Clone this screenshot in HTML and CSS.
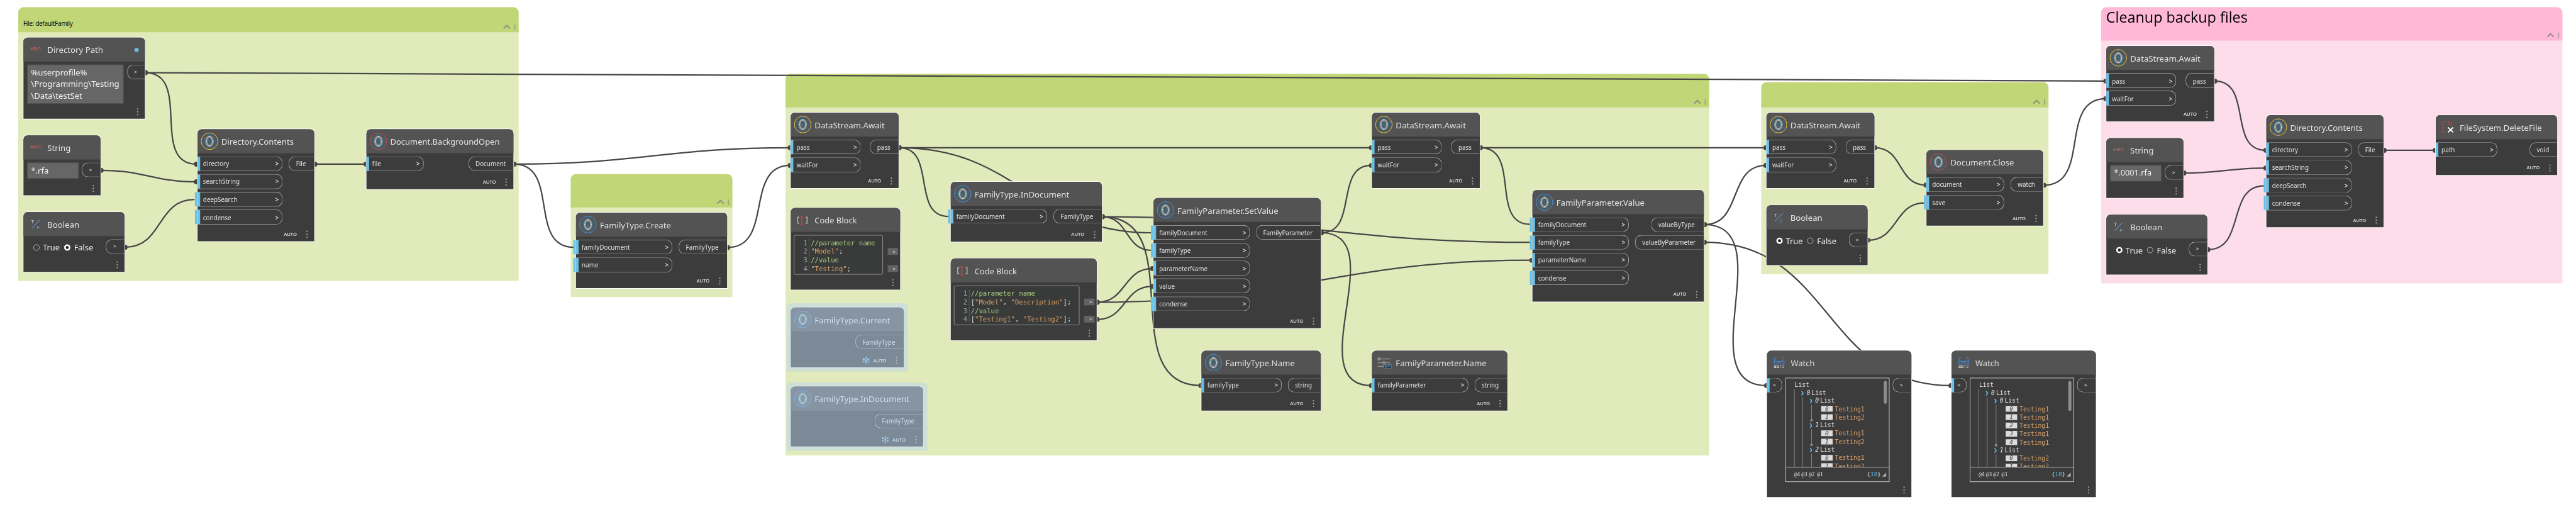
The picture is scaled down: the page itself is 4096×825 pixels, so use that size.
FILE: index.html
```html
<!DOCTYPE html>
<html lang="en">
<head>
<meta charset="utf-8">
<title>Graph workspace</title>
<link rel="stylesheet" href="styles.css">
</head>
<body>
<svg class="defs" width="0" height="0" aria-hidden="true">
  <symbol id="orchid" viewBox="0 0 34 34">
    <circle cx="17" cy="17" r="15.6" fill="#555"/>
    <g fill="#41606f">
      <ellipse cx="17" cy="8.5" rx="5.6" ry="7"/>
      <path d="M3 12 L13 11 L15 18 L8 23 Q2 19 3 12Z"/>
      <path d="M31 12 L21 11 L19 18 L26 23 Q32 19 31 12Z"/>
      <path d="M6.500 22 L14 19 L17 26 L14 31.800 Q8 31 6.500 22Z"/>
      <path d="M27.500 22 L20 19 L17 26 L20 31.800 Q26 31 27.500 22Z"/>
      <ellipse cx="17" cy="17" rx="6" ry="8.500"/>
    </g>
    <g fill="none" stroke="#6d6a66" stroke-width=".6">
      <path d="M3 11.500 L14 11 M31 11.500 L20 11 M5 24 L13 20 M29 24 L21 20 M13 32 L17 25 L21 32"/>
      <path d="M14.500 13 L17 17 L19.500 13 M17 17 V22 M14.500 22 L17 18 L19.500 22"/>
    </g>
    <ellipse cx="17" cy="17" rx="6.200" ry="8.900" fill="none" stroke="#9c9c9c" stroke-width="3.700"/>
    <g fill="#fff"><circle cx="17" cy="8.200" r=".9"/><circle cx="17" cy="25.800" r=".9"/><circle cx="10.800" cy="17" r=".9"/><circle cx="23.200" cy="17" r=".9"/></g>
    <circle cx="17" cy="17" r="16" fill="none" stroke="currentColor" stroke-width="1.200"/>
  </symbol>
  <symbol id="slash" viewBox="0 0 34 34">
    <path d="M10 25 L25 9" stroke="#5b8fc4" stroke-width="1.400"/>
  </symbol>
  <symbol id="code" viewBox="0 0 34 34">
    <path d="M10.500 11.800 H7.400 V23.200 H10.500 M22.500 11.800 H25.400 V23.200 H22.500" fill="none" stroke="#b9b9b9" stroke-width="1.700"/>
    <path d="M12.300 10 H18.500 M12.300 26.300 H18.500 M15.400 10 V26.300" fill="none" stroke="#b84545" stroke-width="2"/>
  </symbol>
  <symbol id="sliders" viewBox="0 0 34 34">
    <path d="M5 9.700 H29 M5 17 H29 M5 24 H18" stroke="#8b8b8b" stroke-width="1.900"/>
    <g fill="#555" stroke="#a0a0a0" stroke-width="1.600"><circle cx="7.700" cy="9.700" r="2.200"/><circle cx="17" cy="17" r="2.200"/></g>
    <rect x="17" y="20.500" width="14" height="7.800" fill="#2b343d" stroke="#888" stroke-width=".9"/>
    <path d="M18.500 22 H22.500 V26.500 H18.500Z M24 22 H29.500 V24 H26 V25.500 H24Z" fill="#3f84c6"/>
  </symbol>
  <symbol id="glasses" viewBox="0 0 34 34">
    <path d="M11.500 6.500 Q8 9 8 14 V19.500 H14.500 L17.500 15 L20.500 19.500 H26.800 V14 Q26.500 9 23.500 6.500 M8 14.500 H26.800" fill="none" stroke="#4585c7" stroke-width="1.400"/>
  </symbol>
  <symbol id="delete" viewBox="0 0 34 34">
    <path d="M13.500 27.800 H7.500 V6 H19 L25 11.500 V14.500 M19 6 V11.500 H25 M19 6 L25 11.500" fill="none" stroke="#b04c4c" stroke-width="1.200"/>
    <path d="M17.500 17.500 L27.500 27 M27.500 17.500 L17.500 27" stroke="#fff" stroke-width="2.300"/>
  </symbol>
  <symbol id="more" viewBox="0 0 4 15"><circle cx="2" cy="2" r="1.400"/><circle cx="2" cy="7.500" r="1.400"/><circle cx="2" cy="13" r="1.400"/></symbol>
  <symbol id="tools" viewBox="0 0 24 12">
    <path d="M1.200 8.800 L7.200 2.800 L13.200 8.800" fill="none" stroke="#858585" stroke-width="2.200"/>
    <path d="M22 .5 V12 M23.200 1.500 V11" fill="none" stroke="#7d7d7d" stroke-width="1.200" stroke-dasharray="1.200 1"/>
  </symbol>
  <symbol id="flake" viewBox="0 0 16 16">
    <path d="M8 .5 V15.500 M1.500 4.300 L14.500 11.700 M14.500 4.300 L1.500 11.700 M6 1.800 L8 3.800 L10 1.800 M6 14.200 L8 12.200 L10 14.200 M1 6.800 L3.800 6 L3 3.200 M15 9.200 L12.200 10 L13 12.800 M13 3.200 L12.200 6 L15 6.800 M3 12.800 L3.800 10 L1 9.200" fill="none" stroke="#a5dcf8" stroke-width="1.100"/>
  </symbol>
</svg>

<main class="window">
<div class="board">
  <section class="group" style="left:35px;top:14px;width:960px;height:524.500px;--head:48px">
    <header class="small"><h2>File: defaultFamily</h2><svg class="tools"><use href="#tools"/></svg></header>
  </section>
  <section class="group" style="left:1095.300px;top:334px;width:309.600px;height:235.700px;--head:64px">
    <header><h2></h2><svg class="tools"><use href="#tools"/></svg></header>
  </section>
  <section class="group" style="left:1507px;top:142px;width:1772px;height:731.600px;--head:64px">
    <header><h2></h2><svg class="tools"><use href="#tools"/></svg></header>
  </section>
  <section class="group" style="left:3379px;top:158px;width:551px;height:367.700px;--head:48px">
    <header><h2></h2><svg class="tools"><use href="#tools"/></svg></header>
  </section>
  <section class="group pink" style="left:4031px;top:14px;width:885px;height:529.600px;--head:64px">
    <header><h2>Cleanup backup files</h2><svg class="tools"><use href="#tools"/></svg></header>
  </section>

  <svg class="wires" viewBox="0 0 4942 996">
    <defs><marker id="dot" viewBox="-5 -5 10 10" markerWidth="10" markerHeight="10" markerUnits="userSpaceOnUse"><circle r="4.800" fill="#444"/></marker></defs>
    <g class="both">
      <path d="M279 139.500 C1971 139.500 2348 155.500 4040 155.500"/>
      <path d="M279 139.500 C369 139.500 287 315 377 315"/>
      <path d="M194 327 C277 327 294 349 377 349"/>
      <path d="M604 315 H702"/>
      <path d="M986 315 C1225 315 1277 283.500 1516 283.500"/>
      <path d="M1396 475 C1485 475 1427 317.500 1516 317.500"/>
      <path d="M1725 283.500 H2631"/>
      <path d="M2115 416 C2284 416 2135 740 2304 740"/>
      <path d="M2105 580 C2161 580 2155 515.500 2211 515.500"/>
      <path d="M2105 580 C2482 580 2562 499.500 2939 499.500"/>
      <path d="M2105 613 C2161 613 2155 549.500 2211 549.500"/>
      <path d="M2535 446.700 C2607 446.700 2559 317.500 2631 317.500"/>
      <path d="M2535 446.700 C2674 446.700 2492 740 2631 740"/>
      <path d="M2840 283.500 H3388"/>
      <path d="M3270 431 C3344 431 3314 317.500 3388 317.500"/>
      <path d="M3270 431 C3419 431 3240 740 3389 740"/>
      <path d="M3270 465 C3516 465 3497 740 3743 740"/>
      <path d="M3597 283.500 C3652 283.500 3640 355.300 3695 355.300"/>
      <path d="M3921 355.500 C4013 355.500 3948 189.500 4040 189.500"/>
      <path d="M4249 155.700 C4323 155.700 4273 288.500 4347 288.500"/>
      <path d="M4190 332 C4261 332 4276 322.500 4347 322.500"/>
      <path d="M4574 288.500 H4672"/>
    </g>
    <g class="start">
      <path d="M240 474.500 C313 474.500 300 383 373 383"/>
      <path d="M986 315 C1075 315 1012 474.700 1101 474.700"/>
      <path d="M1725 283.500 C1798 283.500 1747 415.500 1820 415.500"/>
      <path d="M1725 283.500 C1955 283.500 1979 446.700 2209 446.700"/>
      <path d="M2115 416 C2166 416 2158 480.500 2209 480.500"/>
      <path d="M2115 416 C2485 416 2567 465 2937 465"/>
      <path d="M2840 283.500 C2919 283.500 2857 430.600 2936 430.600"/>
      <path d="M3583.500 461 C3642 461 3634 389.500 3692 389.500"/>
      <path d="M4236 479 C4309 479 4271 356.500 4344 356.500"/>
    </g>
  </svg>

  <article class="node" style="left:45px;top:72px;width:233px;height:155.500px;--out:34.600px">
    <header><b class="abc">ABC</b><h3>Directory Path</h3><i class="status"></i></header>
    <div class="body"><div class="field">%userprofile%<br>\Programming\Testing<br>\Data\testSet</div><div class="outs"><span class="out bare">&gt;</span></div></div>
    <footer><svg class="more"><use href="#more"/></svg></footer>
  </article>
  <article class="node" style="left:45px;top:260px;width:148px;height:115px;--out:34.600px">
    <header><b class="abc">ABC</b><h3>String</h3></header>
    <div class="body"><div class="field">*.rfa</div><div class="outs"><span class="out bare">&gt;</span></div></div>
    <footer><svg class="more"><use href="#more"/></svg></footer>
  </article>
  <article class="node" style="left:45px;top:407px;width:194px;height:115px;--out:34.600px">
    <header><svg class="icon" viewBox="0 0 34 34"><use href="#slash"/><text x="8.500" y="16" class="tf">T</text><text x="19.500" y="27" class="tf dim">F</text></svg><h3>Boolean</h3></header>
    <div class="body"><div class="radios"><i class="radio"></i>True<i class="radio on"></i>False</div><div class="outs"><span class="out bare">&gt;</span></div></div>
    <footer><svg class="more"><use href="#more"/></svg></footer>
  </article>
  <article class="node" style="left:378.500px;top:248px;width:224.600px;height:215px;--in:163.500px;--out:47.700px">
    <header><svg class="icon yellow"><use href="#orchid"/></svg><h3>Directory.Contents</h3></header>
    <div class="body"><div class="ins"><span class="in">directory<i>&gt;</i></span><span class="in">searchString<i>&gt;</i></span><span class="in free">deepSearch<i>&gt;</i></span><span class="in free">condense<i>&gt;</i></span></div><div class="outs"><span class="out">File</span></div></div>
    <footer>AUTO<svg class="more"><use href="#more"/></svg></footer>
  </article>
  <article class="node" style="left:703px;top:248px;width:282px;height:115px;--in:109.500px;--out:85.400px">
    <header><svg class="icon red"><use href="#orchid"/></svg><h3 class="tight">Document.BackgroundOpen</h3></header>
    <div class="body"><div class="ins"><span class="in">file<i>&gt;</i></span></div><div class="outs"><span class="out">Document</span></div></div>
    <footer>AUTO<svg class="more"><use href="#more"/></svg></footer>
  </article>

  <article class="node" style="left:1105.200px;top:408px;width:289.800px;height:144.800px;--in:184.700px;--out:91.600px">
    <header><svg class="icon blue"><use href="#orchid"/></svg><h3>FamilyType.Create</h3></header>
    <div class="body"><div class="ins"><span class="in free">familyDocument<i>&gt;</i></span><span class="in free">name<i>&gt;</i></span></div><div class="outs"><span class="out">FamilyType</span></div></div>
    <footer>AUTO<svg class="more"><use href="#more"/></svg></footer>
  </article>

  <article class="node" style="left:1517px;top:216px;width:207px;height:144.800px;--in:134px;--out:53.600px">
    <header><svg class="icon yellow"><use href="#orchid"/></svg><h3>DataStream.Await</h3></header>
    <div class="body"><div class="ins"><span class="in">pass<i>&gt;</i></span><span class="in">waitFor<i>&gt;</i></span></div><div class="outs"><span class="out">pass</span></div></div>
    <footer>AUTO<svg class="more"><use href="#more"/></svg></footer>
  </article>
  <article class="node" style="left:1517px;top:399px;width:210px;height:157px">
    <header><svg class="icon"><use href="#code"/></svg><h3 class="tight">Code Block</h3></header>
    <div class="body">
      <div class="editor"><div class="gutter">1<br>2<br>3<br>4</div><pre><em>//parameter name</em>
<q>"Model"</q>;
<em>//value</em>
<q>"Testing"</q>;</pre></div>
      <div class="tabs"><span>&gt;</span><span>&gt;</span></div>
    </div>
    <footer><svg class="more"><use href="#more"/></svg></footer>
  </article>
  <article class="node frozen" style="left:1517px;top:590px;width:217px;height:115px;--out:91.600px">
    <header><svg class="icon blue"><use href="#orchid"/></svg><h3>FamilyType.Current</h3></header>
    <div class="body"><div class="outs"><span class="out">FamilyType</span></div></div>
    <footer><svg class="flake"><use href="#flake"/></svg>AUTO<svg class="more"><use href="#more"/></svg></footer>
  </article>
  <article class="node frozen" style="left:1517px;top:742px;width:254px;height:115px;--out:91.600px">
    <header><svg class="icon blue"><use href="#orchid"/></svg><h3>FamilyType.InDocument</h3></header>
    <div class="body"><div class="outs"><span class="out">FamilyType</span></div></div>
    <footer><svg class="flake"><use href="#flake"/></svg>AUTO<svg class="more"><use href="#more"/></svg></footer>
  </article>
  <article class="node" style="left:1824px;top:349px;width:290px;height:114.500px;--in:184.700px;--out:91.600px">
    <header><svg class="icon blue"><use href="#orchid"/></svg><h3>FamilyType.InDocument</h3></header>
    <div class="body"><div class="ins"><span class="in free">familyDocument<i>&gt;</i></span></div><div class="outs"><span class="out">FamilyType</span></div></div>
    <footer>AUTO<svg class="more"><use href="#more"/></svg></footer>
  </article>
  <article class="node" style="left:1824px;top:496px;width:280px;height:157px">
    <header><svg class="icon"><use href="#code"/></svg><h3 class="tight">Code Block</h3></header>
    <div class="body">
      <div class="editor"><div class="gutter">1<br>2<br>3<br>4</div><pre><em>//parameter name</em>
[<q>"Model"</q>, <q>"Description"</q>];
<em>//value</em>
[<q>"Testing1"</q>, <q>"Testing2"</q>];</pre></div>
      <div class="tabs"><span>&gt;</span><span>&gt;</span></div>
    </div>
    <footer><svg class="more"><use href="#more"/></svg></footer>
  </article>
  <article class="node" style="left:2213px;top:380px;width:320.800px;height:249.800px;--in:185px;--out:123px">
    <header><svg class="icon blue"><use href="#orchid"/></svg><h3>FamilyParameter.SetValue</h3></header>
    <div class="body"><div class="ins"><span class="in free">familyDocument<i>&gt;</i></span><span class="in free">familyType<i>&gt;</i></span><span class="in">parameterName<i>&gt;</i></span><span class="in">value<i>&gt;</i></span><span class="in free">condense<i>&gt;</i></span></div><div class="outs"><span class="out">FamilyParameter</span></div></div>
    <footer>AUTO<svg class="more"><use href="#more"/></svg></footer>
  </article>
  <article class="node" style="left:2305.200px;top:673px;width:228.600px;height:115px;--in:153.600px;--out:61.800px">
    <header><svg class="icon blue"><use href="#orchid"/></svg><h3>FamilyType.Name</h3></header>
    <div class="body"><div class="ins"><span class="in">familyType<i>&gt;</i></span></div><div class="outs"><span class="out">string</span></div></div>
    <footer>AUTO<svg class="more"><use href="#more"/></svg></footer>
  </article>
  <article class="node" style="left:2632px;top:216px;width:207px;height:144.800px;--in:134px;--out:53.600px">
    <header><svg class="icon yellow"><use href="#orchid"/></svg><h3>DataStream.Await</h3></header>
    <div class="body"><div class="ins"><span class="in">pass<i>&gt;</i></span><span class="in">waitFor<i>&gt;</i></span></div><div class="outs"><span class="out">pass</span></div></div>
    <footer>AUTO<svg class="more"><use href="#more"/></svg></footer>
  </article>
  <article class="node" style="left:2632px;top:673px;width:260px;height:115px;--in:184.500px;--out:61.800px">
    <header><svg class="icon"><use href="#sliders"/></svg><h3>FamilyParameter.Name</h3></header>
    <div class="body"><div class="ins"><span class="in">familyParameter<i>&gt;</i></span></div><div class="outs"><span class="out">string</span></div></div>
    <footer>AUTO<svg class="more"><use href="#more"/></svg></footer>
  </article>
  <article class="node" style="left:2940px;top:364.500px;width:329px;height:214px;--in:185px;--out:100px">
    <header><svg class="icon blue"><use href="#orchid"/></svg><h3>FamilyParameter.Value</h3></header>
    <div class="body"><div class="ins"><span class="in free">familyDocument<i>&gt;</i></span><span class="in free">familyType<i>&gt;</i></span><span class="in">parameterName<i>&gt;</i></span><span class="in free">condense<i>&gt;</i></span></div><div class="outs"><span class="out">valueByType</span><span class="out wide">valueByParameter</span></div></div>
    <footer>AUTO<svg class="more"><use href="#more"/></svg></footer>
  </article>

  <article class="node" style="left:3389px;top:216px;width:206.700px;height:144.800px;--in:133.700px;--out:53.600px">
    <header><svg class="icon yellow"><use href="#orchid"/></svg><h3>DataStream.Await</h3></header>
    <div class="body"><div class="ins"><span class="in">pass<i>&gt;</i></span><span class="in">waitFor<i>&gt;</i></span></div><div class="outs"><span class="out">pass</span></div></div>
    <footer>AUTO<svg class="more"><use href="#more"/></svg></footer>
  </article>
  <article class="node" style="left:3389px;top:394px;width:193.600px;height:115px;--out:34.600px">
    <header><svg class="icon" viewBox="0 0 34 34"><use href="#slash"/><text x="8.500" y="16" class="tf">T</text><text x="19.500" y="27" class="tf dim">F</text></svg><h3>Boolean</h3></header>
    <div class="body"><div class="radios"><i class="radio on"></i>True<i class="radio"></i>False</div><div class="outs"><span class="out bare">&gt;</span></div></div>
    <footer><svg class="more"><use href="#more"/></svg></footer>
  </article>
  <article class="node" style="left:3696px;top:288px;width:224px;height:144.800px;--in:148.600px;--out:61.600px">
    <header><svg class="icon red"><use href="#orchid"/></svg><h3>Document.Close</h3></header>
    <div class="body"><div class="ins"><span class="in">document<i>&gt;</i></span><span class="in free">save<i>&gt;</i></span></div><div class="outs"><span class="out">watch</span></div></div>
    <footer>AUTO<svg class="more"><use href="#more"/></svg></footer>
  </article>

  <article class="node" style="left:3390px;top:673px;width:277px;height:280.700px;--in:29px;--out:35px">
    <header><svg class="icon" viewBox="0 0 34 34"><use href="#glasses"/><text x="6.800" y="27.200" class="ab">ab<tspan class="thin">12</tspan></text></svg><h3 class="tight">Watch</h3></header>
    <div class="body">
      <div class="ins"><span class="in bare">&gt;</span></div>
      <div class="viewer">
        <div class="tree" style="--thumb:44px">
          <p>List</p>
          <div class="kids k0">
            <p><s></s><i>0</i>List</p>
            <div class="kids k1">
              <p><s></s><i>0</i>List</p>
              <div class="kids k2"><p class="leaf"><i>0</i>Testing1</p><p class="leaf"><i>1</i>Testing2</p></div>
              <p><s></s><i>1</i>List</p>
              <div class="kids k2"><p class="leaf"><i>0</i>Testing1</p><p class="leaf"><i>1</i>Testing2</p></div>
              <p><s></s><i>2</i>List</p>
              <div class="kids k2"><p class="leaf"><i>0</i>Testing1</p><p class="leaf"><i>1</i>Testing2</p></div>
            </div>
          </div>
        </div>
        <div class="levels"><span>@4</span><span>@3</span><span>@2</span><span class="last">@1</span><strong>{<b>18</b>}</strong><u></u></div>
      </div>
      <div class="outs"><span class="out bare">&gt;</span></div>
    </div>
    <footer><svg class="more"><use href="#more"/></svg></footer>
  </article>
  <article class="node" style="left:3744px;top:673px;width:277px;height:280.700px;--in:29px;--out:35px">
    <header><svg class="icon" viewBox="0 0 34 34"><use href="#glasses"/><text x="6.800" y="27.200" class="ab">ab<tspan class="thin">12</tspan></text></svg><h3 class="tight">Watch</h3></header>
    <div class="body">
      <div class="ins"><span class="in bare">&gt;</span></div>
      <div class="viewer">
        <div class="tree" style="--thumb:58px">
          <p>List</p>
          <div class="kids k0">
            <p><s></s><i>0</i>List</p>
            <div class="kids k1">
              <p><s></s><i>0</i>List</p>
              <div class="kids k2"><p class="leaf"><i>0</i>Testing1</p><p class="leaf"><i>1</i>Testing1</p><p class="leaf"><i>2</i>Testing1</p><p class="leaf"><i>3</i>Testing1</p><p class="leaf"><i>4</i>Testing1</p></div>
              <p><s></s><i>1</i>List</p>
              <div class="kids k2"><p class="leaf"><i>0</i>Testing2</p><p class="leaf"><i>1</i>Testing2</p></div>
            </div>
          </div>
        </div>
        <div class="levels"><span>@4</span><span>@3</span><span>@2</span><span class="last">@1</span><strong>{<b>18</b>}</strong><u></u></div>
      </div>
      <div class="outs"><span class="out bare">&gt;</span></div>
    </div>
    <footer><svg class="more"><use href="#more"/></svg></footer>
  </article>

  <article class="node" style="left:4041px;top:88.200px;width:207px;height:144.800px;--in:134px;--out:53.600px">
    <header><svg class="icon yellow"><use href="#orchid"/></svg><h3>DataStream.Await</h3></header>
    <div class="body"><div class="ins"><span class="in">pass<i>&gt;</i></span><span class="in">waitFor<i>&gt;</i></span></div><div class="outs"><span class="out">pass</span></div></div>
    <footer>AUTO<svg class="more"><use href="#more"/></svg></footer>
  </article>
  <article class="node" style="left:4041px;top:265px;width:148px;height:115px;--out:34.600px">
    <header><b class="abc">ABC</b><h3>String</h3></header>
    <div class="body"><div class="field snug">*.0001.rfa</div><div class="outs"><span class="out bare">&gt;</span></div></div>
    <footer><svg class="more"><use href="#more"/></svg></footer>
  </article>
  <article class="node" style="left:4041px;top:412px;width:194px;height:115px;--out:34.600px">
    <header><svg class="icon" viewBox="0 0 34 34"><use href="#slash"/><text x="8.500" y="16" class="tf">T</text><text x="19.500" y="27" class="tf dim">F</text></svg><h3>Boolean</h3></header>
    <div class="body"><div class="radios"><i class="radio on"></i>True<i class="radio"></i>False</div><div class="outs"><span class="out bare">&gt;</span></div></div>
    <footer><svg class="more"><use href="#more"/></svg></footer>
  </article>
  <article class="node" style="left:4348px;top:221px;width:225px;height:215px;--in:164px;--out:48px">
    <header><svg class="icon yellow"><use href="#orchid"/></svg><h3>Directory.Contents</h3></header>
    <div class="body"><div class="ins"><span class="in">directory<i>&gt;</i></span><span class="in">searchString<i>&gt;</i></span><span class="in free">deepSearch<i>&gt;</i></span><span class="in free">condense<i>&gt;</i></span></div><div class="outs"><span class="out">File</span></div></div>
    <footer>AUTO<svg class="more"><use href="#more"/></svg></footer>
  </article>
  <article class="node" style="left:4673px;top:221px;width:233px;height:114.700px;--in:118px;--out:51.700px">
    <header><svg class="icon"><use href="#delete"/></svg><h3>FileSystem.DeleteFile</h3></header>
    <div class="body"><div class="ins"><span class="in">path<i>&gt;</i></span></div><div class="outs"><span class="out">void</span></div></div>
    <footer>AUTO<svg class="more"><use href="#more"/></svg></footer>
  </article>
</div>
</main>
</body>
</html>
```

FILE: styles.css
```css
* { box-sizing: border-box; margin: 0; padding: 0; }
body { background: #fff; font-family: "Noto Sans", "Open Sans", sans-serif; }
.defs { position: absolute; }
.window { width: 4096px; height: 825px; overflow: hidden; }

/* canvas at 83% zoom level */
.board {
  position: relative;
  width: 4942px;
  height: 996px;
  transform: scale(.8288, .8283);
  transform-origin: 0 0;
}

/* groups */
.group { position: absolute; background: #e0eaba; border-radius: 10px 10px 0 0; }
.group header {
  display: flex;
  justify-content: space-between;
  height: var(--head);
  padding: 0 6px 0 9.5px;
  background: #c1d676;
  border-radius: 10px 10px 0 0;
}
.group h2 { font: 400 28.2px "Open Sans", "Noto Sans", sans-serif; color: #000; white-space: nowrap; }
.group .small h2 { align-self: flex-end; font-size: 12.2px; letter-spacing: -.4px; padding-bottom: 9px; }
.group .tools { align-self: flex-end; width: 24px; height: 12px; margin-bottom: 4.5px; }
.pink { background: #feddeb; }
.pink header { background: #ffb8d8; }

/* connectors */
.wires { position: absolute; inset: 0; width: 4942px; height: 996px; }
.wires g { fill: none; stroke: #464646; stroke-width: 2.7; }
.both path { marker-start: url(#dot); marker-end: url(#dot); }
.start path { marker-start: url(#dot); }

/* nodes */
.node {
  position: absolute;
  display: flex;
  flex-direction: column;
  background: #3c3c3c;
  border-radius: 8px 8px 0 0;
  box-shadow: 0 0 0 1px #fff;
  color: #e2e2e2;
  font-size: 11.9px;
  line-height: 16px;
}
.node > header {
  display: flex;
  align-items: center;
  flex: none;
  height: 46px;
  padding-left: 6.3px;
  background: #535353;
  border-radius: 8px 8px 0 0;
}
.node h3 { font-weight: 400; font-size: 15.95px; line-height: 22px; padding-top: 2px; white-space: nowrap; }
.node h3.tight { font-size: 15.6px; }
.icon { flex: none; width: 34px; height: 34px; margin-right: 5.5px; overflow: visible; }
.yellow { color: #ebc542; }
.red { color: #c25050; }
.blue { color: #4a8fd6; }
.abc {
  width: 33.2px;
  margin: 0 0 3px 6.3px;
  font: 700 9.8px/12px "Liberation Sans", sans-serif;
  color: #a56464;
}
.tf { font: 9.5px "Liberation Sans", sans-serif; fill: #d5d5d5; }
.tf.dim { fill: #999; }
.ab { font: 700 8.8px "Noto Sans", sans-serif; fill: #d5d5d5; }
.ab .thin { font-weight: 400; font-size: 8.4px; }
.status { width: 8px; height: 8px; margin: 2px 12px 0 auto; border-radius: 50%; background: #6ac0e7; }

.body { display: flex; padding-top: 6.2px; }
.ins { display: flex; flex-direction: column; gap: 5.8px; }
.outs { display: flex; flex-direction: column; gap: 5.8px; align-items: flex-end; margin: 0 1px 0 auto; }
.in, .out { display: flex; align-items: center; height: 28.3px; border: 1.1px solid #a8a8a8; white-space: nowrap; }
.in {
  position: relative;
  justify-content: space-between;
  width: var(--in);
  padding: 0 6px 0 11px;
  border-left: 0;
  border-radius: 0 12px 12px 0;
}
.in i { font-style: normal; font-weight: 600; }
.in::before { content: ""; position: absolute; left: 0; top: 0; width: 5px; height: 27px; background: #6ac0e7; }
.in.free::after { content: ""; position: absolute; left: -5px; top: 0; width: 4px; height: 27px; background: #6ac0e7; }
.out { width: var(--out); padding-left: 12.5px; border-right: 0; border-radius: 12px 0 0 12px; }
.out.wide { width: 131px; }
.out.bare, .in.bare { font-size: 9.5px; font-weight: 600; }
.out.bare { padding-left: 13px; }
.in.bare { padding-left: 11.5px; }

.node > footer {
  display: flex;
  align-items: center;
  justify-content: flex-end;
  height: 27px;
  margin-top: auto;
  padding-right: 12px;
  font-size: 9.3px;
  font-weight: 500;
  color: #e6e6e6;
}
.more { width: 4px; height: 15px; margin-left: 17.5px; fill: #a3a3a3; }
.flake { width: 15px; height: 15px; margin-right: 6px; }

/* value widgets */
.field {
  flex: 1;
  margin: 0 6.8px 0 6.5px;
  padding: 2.5px 7px 4px;
  background: #666;
  border: 1px solid #4c4c4c;
  font-size: 15.9px;
  line-height: 22px;
  color: #f0f0f0;
  white-space: nowrap;
}
.field.snug { font-size: 15.4px; }
.radios { display: flex; align-items: center; height: 32px; padding-left: 18.5px; font-size: 15.6px; color: #f0f0f0; }
.radio { width: 12px; height: 12px; margin-right: 6.5px; border: 1.2px solid #cfcfcf; border-radius: 50%; }
.radio.on { border: 3.6px solid #fff; background: #222; }
.radios .radio:nth-of-type(2) { margin-left: 8.7px; }

/* code block */
.editor {
  display: flex;
  flex: 1;
  height: 76px;
  margin-left: 6px;
  padding: 6.8px 0 0 1px;
  border: 1px solid #a2a2a2;
  border-radius: 3px;
  background: #393b3a;
  font: 12.8px/16.5px "DejaVu Sans Mono", monospace;
}
.gutter { width: 28px; margin-bottom: 5px; padding-right: 3px; border-right: 1px dotted #8a8a8a; text-align: right; color: #a0a0a0; }
.editor pre { padding-left: 2.5px; font: inherit; color: #dcdcdc; }
.editor em { font-style: normal; color: #a9cc7e; }
.editor q { quotes: none; color: #dca067; }
.editor q::before, .editor q::after { content: none; }
.tabs { display: flex; flex-direction: column; gap: 20px; padding: 25.3px 4px 0 9px; }
.tabs span { width: 20px; height: 13px; padding-left: 10px; background: #636363; font-size: 9.5px; line-height: 13px; }

/* frozen nodes */
.frozen::after { content: ""; position: absolute; inset: -8px; border-radius: 8px 8px 0 0; background: rgba(187, 213, 241, .5); }
.frozen .flake { position: relative; z-index: 1; }

/* watch */
.viewer { width: 200px; height: 199.7px; margin-left: 6px; border: 1.4px solid #e2e2e2; font: 11.6px/15px "DejaVu Sans Mono", monospace; }
.tree { position: relative; height: 170px; padding: 6px 0 0 16px; overflow: hidden; }
.tree::after {
  content: "";
  position: absolute;
  right: 4.5px;
  top: 5px;
  width: 6px;
  height: var(--thumb);
  border-radius: 3px;
  background: #8c8c8c;
}
.tree p { display: flex; align-items: center; height: 15px; padding-left: 12px; color: #e2e2e2; }
.tree > p { padding-left: 1px; }
.tree i { width: 9px; margin-right: .5px; }
.tree s { width: 5.5px; height: 9.5px; margin-right: 5.5px; background: #5bb8e4; clip-path: polygon(0 0, 40% 0, 100% 50%, 40% 100%, 0 100%, 50% 50%); }
.kids { position: relative; border-left: 1px solid #8f8f8f; }
.k1 { margin-left: 14.5px; }
.k1 > p { padding-left: 13px; }
.k2 { margin-left: 16px; }
.k2::after { content: ""; position: absolute; left: -3px; bottom: .5px; width: 5px; height: 5px; border-radius: 50%; background: #8f8f8f; }
.tree .leaf { height: 16px; padding-left: 18.3px; color: #dca067; font-size: 11.8px; }
.tree .leaf i { width: 22px; height: 11px; margin: 0 4.5px 1px 0; background: #dcdcdc; color: #444; font-size: 11.4px; line-height: 11px; text-align: center; }
.levels { display: flex; align-items: center; height: 27px; padding: 0 5px 0 16px; border-top: 1.4px solid #e2e2e2; font-size: 9.6px; color: #dcdcdc; }
.levels span { width: 14px; }
.levels .last { margin-left: 2px; }
.levels strong { margin-left: auto; font-weight: 400; font-size: 11.1px; }
.levels b { font-weight: 400; color: #5bb8e4; }
.levels u { width: 8px; height: 8px; margin: 0 0 -1px 2.5px; background: #b0b0b0; clip-path: polygon(100% 0, 100% 100%, 0 100%); }
```
